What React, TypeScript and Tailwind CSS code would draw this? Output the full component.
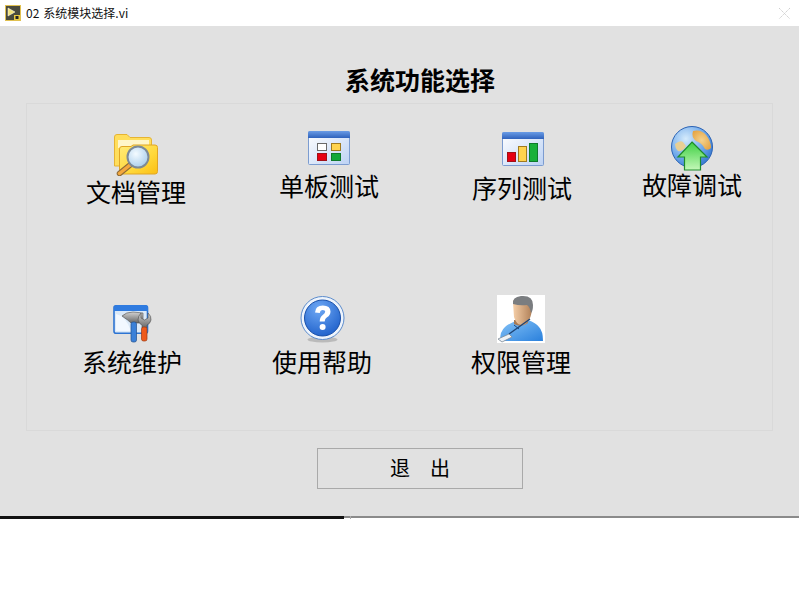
import React from "react";

const FONT = "font-['Microsoft_YaHei','Noto_Sans_CJK_SC','Noto_Sans',sans-serif]";

function Defs() {
  return (
    <svg width="0" height="0" className="absolute">
      <defs>
        <linearGradient id="folder" x1="0" y1="0" x2="1" y2="1">
          <stop offset="0" stopColor="#ffec7a" />
          <stop offset="0.6" stopColor="#ffd83a" />
          <stop offset="1" stopColor="#fbbf14" />
        </linearGradient>
        <radialGradient id="lens" cx="0.4" cy="0.35" r="0.8">
          <stop offset="0" stopColor="#f4fbff" />
          <stop offset="1" stopColor="#9cc6e8" />
        </radialGradient>
        <linearGradient id="winbar" x1="0" y1="0" x2="0" y2="1">
          <stop offset="0" stopColor="#6a9ce6" />
          <stop offset="1" stopColor="#2f62bc" />
        </linearGradient>
        <linearGradient id="winbody" x1="0" y1="0" x2="1" y2="1">
          <stop offset="0" stopColor="#ffffff" />
          <stop offset="1" stopColor="#bcd2f4" />
        </linearGradient>
        <radialGradient id="globe" cx="0.35" cy="0.3" r="0.85">
          <stop offset="0" stopColor="#d5ebfc" />
          <stop offset="0.55" stopColor="#6ea8ea" />
          <stop offset="1" stopColor="#2468c8" />
        </radialGradient>
        <radialGradient id="land" cx="0.5" cy="0.5" r="0.6">
          <stop offset="0" stopColor="#f3d28e" />
          <stop offset="1" stopColor="#e6a544" />
        </radialGradient>
        <linearGradient id="arrow" x1="0" y1="0" x2="0" y2="1">
          <stop offset="0" stopColor="#3dcf42" />
          <stop offset="1" stopColor="#c4f8b8" />
        </linearGradient>
        <radialGradient id="help" cx="0.4" cy="0.25" r="0.85">
          <stop offset="0" stopColor="#6ea8f4" />
          <stop offset="1" stopColor="#1a5cc8" />
        </radialGradient>
        <linearGradient id="shirt" x1="0" y1="0" x2="1" y2="1">
          <stop offset="0" stopColor="#86c4f8" />
          <stop offset="1" stopColor="#2a80dc" />
        </linearGradient>
        <linearGradient id="face" x1="0" y1="0" x2="1" y2="0">
          <stop offset="0" stopColor="#f6cfa8" />
          <stop offset="1" stopColor="#b08058" />
        </linearGradient>
        <linearGradient id="steel" x1="0" y1="0" x2="0" y2="1">
          <stop offset="0" stopColor="#d2d2d2" />
          <stop offset="1" stopColor="#666" />
        </linearGradient>
      </defs>
    </svg>
  );
}

function FolderIcon() {
  return (
    <svg width="44" height="42" viewBox="0 0 44 42">
      <path d="M0.500 3q0-2.500 2.500-2.500h10l3 3h19q2.500 0 2.500 2.500v26H0.500z" fill="#ffde5c" stroke="#e6b432" />
      <rect x="4" y="6" width="31" height="8" fill="#fff6c8" />
      <path d="M5.500 15q0-2.500 2.500-2.500h9l2-1.500h22q2.500 0 2.500 2.500v24q0 2.500-2.500 2.500H8q-2.500 0-2.500-2.500z" fill="url(#folder)" stroke="#e0a626" />
      <path d="M16 31 5.500 39.500" stroke="#8c6a38" strokeWidth="5.500" strokeLinecap="round" />
      <path d="M16 31 5.500 39.500" stroke="#f4a83e" strokeWidth="3.500" strokeLinecap="round" />
      <circle cx="24" cy="23" r="10.500" fill="url(#lens)" stroke="#7d8a96" strokeWidth="2" />
    </svg>
  );
}

function BoardIcon() {
  return (
    <svg width="42" height="34" viewBox="0 0 42 34">
      <rect x="0.500" y="0.500" width="41" height="33" rx="1" fill="url(#winbody)" stroke="#7c9cd0" />
      <path d="M0 2q0-2 2-2h38q2 0 2 2v5H0z" fill="url(#winbar)" />
      <rect x="9.500" y="12.500" width="9" height="7" fill="#fff" stroke="#6a6a6a" />
      <rect x="23.500" y="12.500" width="9" height="7" fill="#ffd34e" stroke="#a07a20" />
      <rect x="9.500" y="22.500" width="9" height="7" fill="#e60012" stroke="#a01018" />
      <rect x="23.500" y="22.500" width="9" height="7" fill="#12a83a" stroke="#0f7a2c" />
    </svg>
  );
}

function SeqIcon() {
  return (
    <svg width="42" height="34" viewBox="0 0 42 34" className="ml-[2px]">
      <rect x="0.500" y="0.500" width="41" height="33" rx="1" fill="url(#winbody)" stroke="#7c9cd0" />
      <path d="M0 2q0-2 2-2h38q2 0 2 2v5H0z" fill="url(#winbar)" />
      <rect x="5.500" y="20.500" width="8" height="9" fill="#e60012" stroke="#a01018" />
      <rect x="16.500" y="14.500" width="8" height="15" fill="#ffd34e" stroke="#a07a20" />
      <rect x="27.500" y="11.500" width="8" height="18" fill="#18b03a" stroke="#0f7a2c" />
    </svg>
  );
}

function GlobeIcon() {
  return (
    <svg width="42" height="45" viewBox="0 0 42 45">
      <circle cx="21" cy="21" r="20.500" fill="url(#globe)" stroke="#2a62b4" />
      <path d="M22 5q8-2 13 4 5 6 5 13-3 3-6 1-3-6-9-8-5-4-3-10z" fill="url(#land)" />
      <path d="M4 18q5-4 8-2l3 4q-3 6-8 5-3-3-3-7z" fill="#e8cf94" />
      <path d="M21 16 36 31H29.500V44H13.500V31H7z" fill="url(#arrow)" stroke="#1d8c2a" strokeWidth="1.200" />
    </svg>
  );
}

function ToolsIcon() {
  return (
    <svg width="39" height="38" viewBox="0 0 39 38">
      <rect x="1" y="0.800" width="33.500" height="27.500" rx="2" fill="#dbe9f8" stroke="#2d74d2" strokeWidth="1.600" />
      <path d="M1 3q0-3 3-3h28q3 0 3 3v3H1z" fill="#2f7be0" />
      <path d="M3 9q10 2 15 17H3z" fill="#f2f8ff" />
      <path d="M9 11q4-4 11-4l10 1v7l-4 3h-8q-3-3-9-7z" fill="url(#steel)" stroke="#4d4d4d" strokeWidth="0.600" />
      <rect x="18" y="17" width="5.500" height="20" rx="2" fill="#3a80d8" stroke="#24508c" strokeWidth="0.700" />
      <path d="M28 8v5l3.500 2 3.500-2V8q3.500 3 3 7-1 4-4 5v3h-5v-3q-3-1-4-5 0-4 3-7z" fill="url(#steel)" stroke="#4d4d4d" strokeWidth="0.600" />
      <rect x="28.500" y="22" width="5.500" height="14" rx="2" fill="#ee5a1c" stroke="#9c3a12" strokeWidth="0.700" />
    </svg>
  );
}

function HelpIcon() {
  return (
    <svg width="45" height="47" viewBox="0 0 45 47">
      <ellipse cx="22.500" cy="43.500" rx="15" ry="3" fill="#a0a0a0" opacity="0.6" />
      <circle cx="22.500" cy="22" r="21.500" fill="#eef4fc" stroke="#5c8ccc" />
      <circle cx="22.500" cy="22" r="18" fill="url(#help)" stroke="#1a50a8" />
      <path d="M15 16.500q.5-7 7.800-7 7.700 0 7.700 6 0 3.700-3.500 5.800-2.300 1.400-2.300 4.200h-5q0-4.500 3-6.500 2.500-1.500 2.500-3.400 0-1.600-2.400-1.600-2.600 0-3 2.900z" fill="#fff" />
      <circle cx="22.600" cy="31" r="3" fill="#fff" />
    </svg>
  );
}

function PersonIcon() {
  return (
    <svg width="48" height="48" viewBox="0 0 48 48">
      <rect width="48" height="48" fill="#fff" />
      <path d="M3 46q0-10 5-14 3-3 13-7h10q8 3 11 7 4 4 4 14z" fill="url(#shirt)" />
      <path d="M17 25h13l1 3q-7 5-14 1z" fill="#a87a54" />
      <path d="M16 8q-1-5 8-6 10 0 11 9 0 9-3 14-3 6-8 5-5-1-7-8z" fill="url(#face)" />
      <path d="M16 9q-1-7 8-8 12-1 12 9 0 6-2 8-1-6-4-8-7 1-14-1z" fill="#7a7d80" />
      <path d="M12 39 33 24" stroke="#1f4576" strokeWidth="1.500" fill="none" />
      <path d="M17 30 22 34" stroke="#1f4576" strokeWidth="1" fill="none" />
      <path d="M1 44 12 39 15 42 5 47z" fill="#eef2f6" stroke="#7d8a96" strokeWidth="0.800" />
    </svg>
  );
}

function Item({ label, icon, cls, gap }: { label: string; icon: React.ReactNode; cls: string; gap: string }) {
  return (
    <div className={`flex w-[100px] flex-col items-center ${cls}`}>
      {icon}
      <div className={`whitespace-nowrap text-[25px] leading-[30px] text-black ${gap}`}>{label}</div>
    </div>
  );
}

export default function App() {
  return (
    <div className={`h-[600px] w-[800px] overflow-hidden bg-white ${FONT}`}>
      <Defs />
      <div className="flex h-[26px] w-[799px] items-center bg-white">
        <svg width="16" height="16" viewBox="0 0 16 16" className="ml-[5px]">
          <rect x="0.500" y="0.500" width="15" height="15" fill="#4a4a3c" stroke="#e0c050" />
          <path d="M3 3 10 7 3 11z" fill="#f3e27a" stroke="#fff" strokeWidth="0.500" />
          <rect x="9" y="10" width="6" height="5" fill="#e8c840" />
          <rect x="10.500" y="11" width="3" height="3" fill="#222" />
        </svg>
        <span className="ml-[5px] flex items-center whitespace-nowrap text-[12px] leading-none text-[#111]">
          <span>02</span>
          <span className="ml-[4px]">系统模块选择.vi</span>
        </span>
        <svg width="13" height="13" viewBox="0 0 13 13" className="ml-auto mr-[8px]">
          <path d="M1 1 12 12M12 1 1 12" stroke="#cfcfcf" strokeWidth="1" strokeDasharray="1.500 0.700" />
        </svg>
      </div>

      <div className="flex h-[490px] w-[799px] flex-col bg-[#e1e1e1]">
        <div className="ml-[345px] mt-[38px] h-[30px] whitespace-nowrap text-[25px] font-bold leading-[30px] text-black">系统功能选择</div>
        <div className="ml-[26px] mt-[9px] h-[328px] w-[747px] border border-[#d9d9d9]">
          <div className="flex h-[103px] items-start">
            <Item label="文档管理" icon={<FolderIcon />} cls="ml-[59px] mt-[30px]" gap="mt-0" />
            <Item label="单板测试" icon={<BoardIcon />} cls="ml-[93px] mt-[27px]" gap="mt-[5px]" />
            <Item label="序列测试" icon={<SeqIcon />} cls="ml-[93px] mt-[28px]" gap="mt-[6px]" />
            <Item label="故障调试" icon={<GlobeIcon />} cls="ml-[70px] mt-[22px]" gap="-mt-[2px]" />
          </div>
          <div className="mt-[88px] flex items-start">
            <Item label="系统维护" icon={<ToolsIcon />} cls="ml-[55px] mt-[10px]" gap="mt-[3px]" />
            <Item label="使用帮助" icon={<HelpIcon />} cls="ml-[90px] mt-[1px]" gap="mt-[3px]" />
            <Item label="权限管理" icon={<PersonIcon />} cls="ml-[99px]" gap="mt-[3px]" />
          </div>
        </div>
        <div className="ml-[317px] mt-[17px] flex h-[41px] w-[206px] items-center justify-center border border-[#a9a9a9] pb-[2px] text-[20px] text-black">
          <span>退</span>
          <span className="ml-[20px]">出</span>
        </div>
      </div>

      <div className="relative h-[3px] w-[799px]">
        <div className="h-[2px] w-full bg-[#8a8a8a]" />
        <div className="absolute left-0 top-0 h-[3px] w-[344px] bg-[#111]" />
        <div className="absolute left-[350px] top-0 h-[3px] w-[1px] bg-[#aaa]" />
      </div>
    </div>
  );
}
